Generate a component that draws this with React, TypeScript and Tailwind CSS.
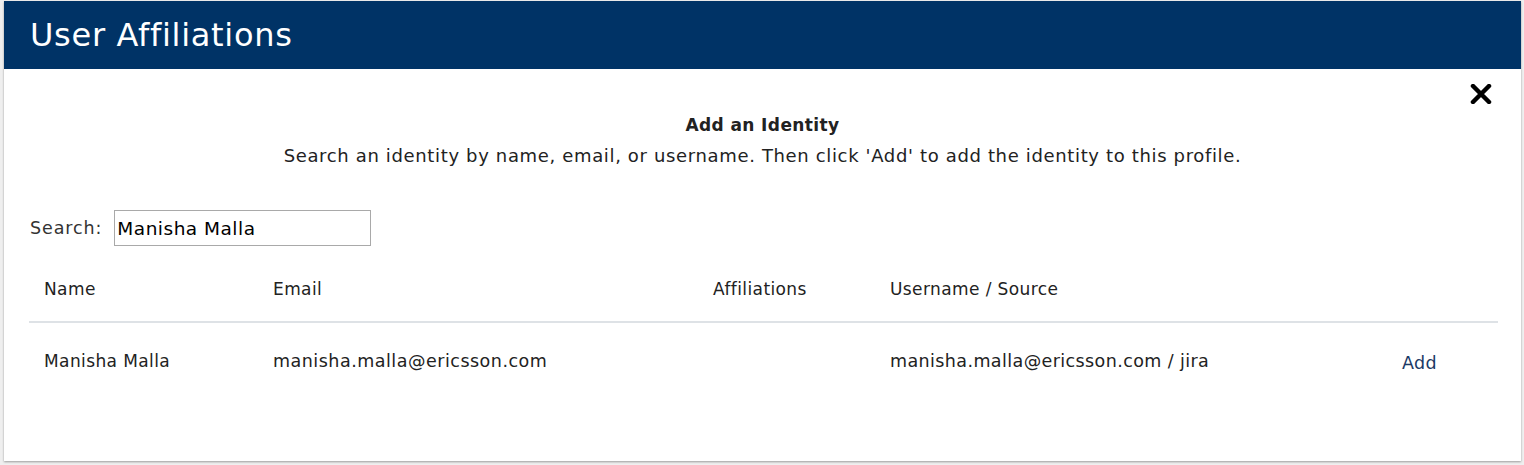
import React, { useState } from 'react';

const rows = [
  {
    name: 'Manisha Malla',
    email: 'manisha.malla@ericsson.com',
    affiliations: '',
    source: 'manisha.malla@ericsson.com / jira',
  },
];

function CloseIcon() {
  return (
    <svg width="22" height="20" viewBox="0 0 22 20">
      <path d="M3 2 L19 18 M19 2 L3 18" stroke="#000" strokeWidth="4.5" strokeLinecap="round" />
    </svg>
  );
}

export default function App() {
  const [query, setQuery] = useState('Manisha Malla');

  return (
    <div className="w-[1524px] h-[465px] bg-[#efefef] pl-[4px] pr-[3px] pt-[1px] font-['DejaVu_Sans',sans-serif]">
      <div className="bg-white h-[460px] shadow-[0_1px_2px_rgba(0,0,0,0.35)]">
        <div className="h-[68px] bg-[#003366] flex items-center pl-[26px]">
          <h1 className="text-white text-[32px] tracking-[0.7px] leading-none font-normal">User Affiliations</h1>
        </div>

        <div className="flex justify-end pr-[29px] pt-[10px] h-[40px]">
          <button className="leading-none">
            <CloseIcon />
          </button>
        </div>

        <div className="text-center text-[#222] leading-[31px] mt-[1px]">
          <div className="font-bold text-[17px] tracking-[0.4px]">Add an Identity</div>
          <div className="text-[18px] tracking-[0.65px] -mt-[1px]">
            Search an identity by name, email, or username. Then click 'Add' to add the identity to this profile.
          </div>
        </div>

        <div className="flex items-center pl-[26px] mt-[39px]">
          <label className="text-[17.5px] tracking-[0.9px] text-[#333] mr-[12px]">Search:</label>
          <input
            value={query}
            onChange={(e) => setQuery(e.target.value)}
            className="w-[257px] h-[36px] border border-[#a9a9a9] px-[2px] text-[18.5px] tracking-[0.5px] text-black outline-none"
          />
        </div>

        <table className="ml-[25px] mt-[4px] w-[1469px] text-[17px] tracking-[0.4px] text-[#222]">
          <thead>
            <tr className="border-b-2 border-[#dee2e6] text-left">
              <th className="font-normal w-[229px] pl-[15px] h-[72px] pt-[8px]">Name</th>
              <th className="font-normal w-[440px] pl-[15px] pt-[8px]">Email</th>
              <th className="font-normal w-[177px] pl-[15px] pt-[8px]">Affiliations</th>
              <th className="font-normal w-[512px] pl-[15px] pt-[8px]">Username / Source</th>
              <th className="font-normal pl-[15px]"></th>
            </tr>
          </thead>
          <tbody>
            {rows.map((r) => (
              <tr key={r.email}>
                <td className="pl-[15px] h-[74px] pt-[4px]">{r.name}</td>
                <td className="pl-[15px] pt-[4px] text-[17.5px] tracking-[0.5px]">{r.email}</td>
                <td className="pl-[15px] pt-[4px]">{r.affiliations}</td>
                <td className="pl-[15px] pt-[4px] text-[17.5px] tracking-[0.4px]">{r.source}</td>
                <td className="pl-[15px] pt-[8px]">
                  <button className="text-[#1b3a66] text-[17.5px] tracking-[0.4px]">Add</button>
                </td>
              </tr>
            ))}
          </tbody>
        </table>
      </div>
    </div>
  );
}
